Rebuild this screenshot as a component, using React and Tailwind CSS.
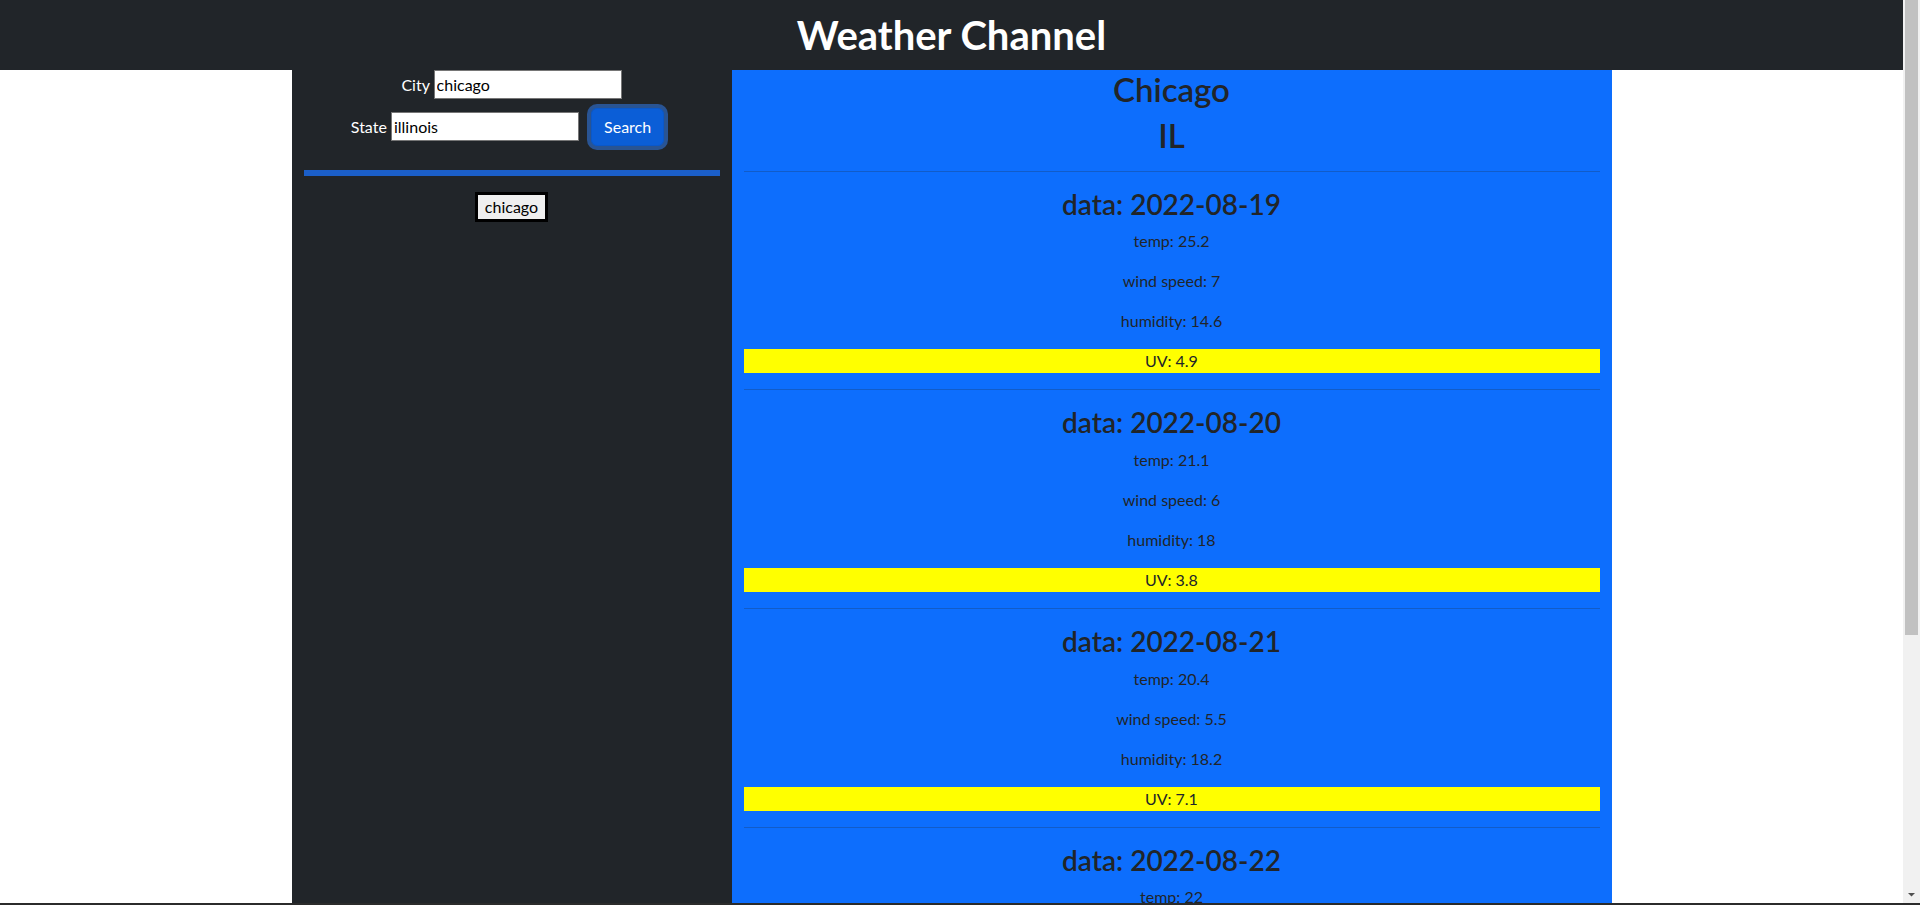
import React, { useState } from 'react';

const forecast = [
  { date: '2022-08-19', temp: 25.2, wind: 7, humidity: 14.6, uv: 4.9 },
  { date: '2022-08-20', temp: 21.1, wind: 6, humidity: 18, uv: 3.8 },
  { date: '2022-08-21', temp: 20.4, wind: 5.5, humidity: 18.2, uv: 7.1 },
  { date: '2022-08-22', temp: 22, wind: 6.3, humidity: 16.4, uv: 5.2 },
  { date: '2022-08-23', temp: 23.7, wind: 4.8, humidity: 15.1, uv: 6.4 },
];

function DayCard({ day }) {
  return (
    <div className="flex flex-col">
      <hr className="border-0 border-t border-[#125cc8] mt-0 mb-4" />
      <h3 className="text-[28px] leading-[33.6px] font-semibold mb-2">data: {day.date}</h3>
      <p className="leading-6 mb-4">temp: {day.temp}</p>
      <p className="leading-6 mb-4">wind speed: {day.wind}</p>
      <p className="leading-6 mb-4">humidity: {day.humidity}</p>
      <p className="leading-6 mb-4 bg-[#ffff00]">UV: {day.uv}</p>
    </div>
  );
}

// stand-in for the browser's classic scrollbar
function Scrollbar() {
  return (
    <div className="w-[17px] shrink-0 bg-[#f1f1f1] flex flex-col">
      <div className="h-[635px] mx-[2px] bg-[#c1c1c1]" />
      <div className="flex-1" />
      <svg width="17" height="17" viewBox="0 0 17 17" className="shrink-0">
        <path d="M5 7h7l-3.5 3.5z" fill="#505050" />
      </svg>
    </div>
  );
}

function App() {
  const [city, setCity] = useState('chicago');
  const [state, setState] = useState('illinois');
  const [history] = useState(['chicago']);

  return (
    <div className="h-screen flex flex-col bg-white font-['Lato','Open_Sans',sans-serif] text-base">
      <div className="flex-1 min-h-0 flex">
        <div className="flex-1 overflow-y-auto [scrollbar-width:none]">
          <header className="h-[70px] bg-[#212529] flex items-center justify-center">
            <h1 className="text-[40px] leading-[48px] font-bold text-white">Weather Channel</h1>
          </header>

          <div className="w-[1320px] mx-auto flex">
            {/* search column */}
            <aside className="w-[440px] shrink-0 bg-[#212529] px-3 text-center text-white">
              <form onSubmit={(e) => e.preventDefault()} className="leading-6">
                <div className="h-[30px]">
                  <label htmlFor="city">City </label>
                  <input
                    id="city"
                    value={city}
                    onChange={(e) => setCity(e.target.value)}
                    className="w-[188px] h-[29px] px-[2px] bg-white text-black border border-[#767676] outline-none align-baseline"
                  />
                </div>
                <div>
                  <label htmlFor="state">State </label>
                  <input
                    id="state"
                    value={state}
                    onChange={(e) => setState(e.target.value)}
                    className="w-[188px] h-[29px] px-[2px] bg-white text-black border border-[#767676] outline-none align-baseline"
                  />{' '}
                  <button
                    type="submit"
                    className="m-2 px-3 py-[6px] rounded-md bg-[#0b5ed7] border border-[#0a58ca] text-white shadow-[0_0_0_4px_#295493]"
                  >
                    Search
                  </button>
                </div>
              </form>

              <hr className="border-0 h-[6px] bg-[#1b5fc9] mt-4 mb-4" />

              {history.map((item) => (
                <button
                  key={item}
                  className="h-[30px] px-[7px] leading-6 bg-[#efefef] border-[3px] border-black text-black"
                >
                  {item}
                </button>
              ))}
            </aside>

            {/* forecast column */}
            <main className="flex-1 bg-[#0d6efd] px-3 flex flex-col text-center text-[#212529]">
              <h2 className="text-[33px] leading-[38.4px] font-semibold mb-2">Chicago</h2>
              <h2 className="text-[33px] leading-[38.4px] font-semibold mb-4">IL</h2>
              {forecast.map((day) => (
                <DayCard key={day.date} day={day} />
              ))}
            </main>
          </div>
        </div>
        <Scrollbar />
      </div>
      <div className="h-[2px] shrink-0 bg-[#2b2b2b]" />
    </div>
  );
}

export default App;
